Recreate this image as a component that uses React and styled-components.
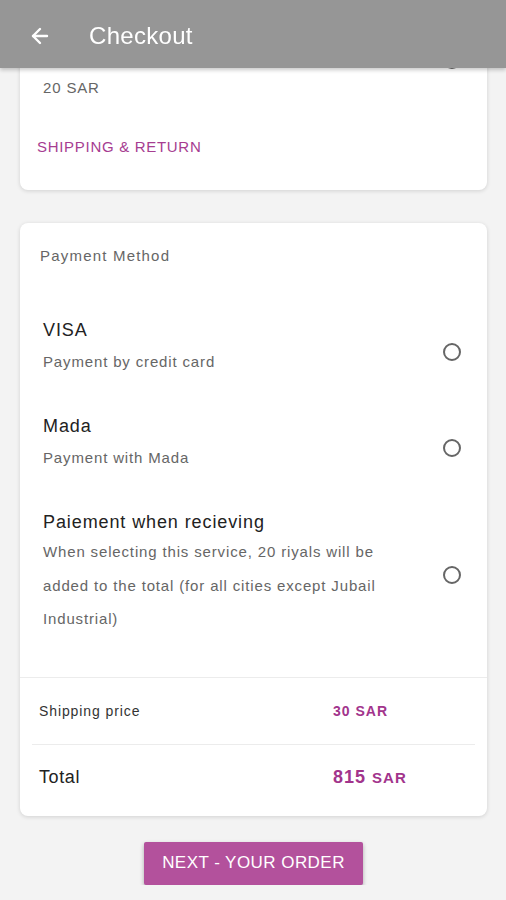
import React from 'react';
import styled, { createGlobalStyle } from 'styled-components';
import { ArrowLeft } from 'lucide-react';

const GlobalStyle = createGlobalStyle`
  html, body {
    margin: 0;
    padding: 0;
    background: #f3f3f3;
    font-family: "Liberation Sans", Arial, sans-serif;
  }
`;

const payments = [
  { title: 'VISA', desc: 'Payment by credit card' },
  { title: 'Mada', desc: 'Payment with Mada' },
  {
    title: 'Paiement when recieving',
    desc: 'When selecting this service, 20 riyals will be added to the total (for all cities except Jubail Industrial)',
    long: true,
  },
];

const Checkout = () => {
  return (
    <>
      <GlobalStyle />
      <Header>
        <BackButton>
          <ArrowLeft size={24} strokeWidth={2.4} color="#fff" />
        </BackButton>
        <Title>Checkout</Title>
      </Header>

      <Page>
        <Card>
          <ShippingBlock>
            <Option>
              <OptionText>
                <OptionTitle>Standard shipping</OptionTitle>
                <OptionDesc $gap={8}>20 SAR</OptionDesc>
              </OptionText>
              <Radio $start />
            </Option>
            <LinkText>SHIPPING &amp; RETURN</LinkText>
          </ShippingBlock>
        </Card>

        <Card>
          <SectionLabel>Payment Method</SectionLabel>
          <OptionList>
            {payments.map((p) => (
              <Option key={p.title}>
                <OptionText>
                  <OptionTitle>{p.title}</OptionTitle>
                  <OptionDesc $long={p.long} $gap={p.long ? 1 : 9}>
                    {p.desc}
                  </OptionDesc>
                </OptionText>
                <Radio $shift={p.long ? 5 : 12} />
              </Option>
            ))}
          </OptionList>

          <Summary>
            <SummaryRow>
              <RowLabel>Shipping price</RowLabel>
              <RowValue>30 SAR</RowValue>
            </SummaryRow>
            <SummaryRow $total>
              <RowLabel $total>Total</RowLabel>
              <RowValue $total>
                815 <small>SAR</small>
              </RowValue>
            </SummaryRow>
          </Summary>
        </Card>

        <Actions>
          <NextButton>NEXT - YOUR ORDER</NextButton>
        </Actions>
      </Page>
    </>
  );
};

const Header = styled.header`
  position: fixed;
  top: 0;
  left: 0;
  right: 0;
  z-index: 10;
  height: 68px;
  box-sizing: border-box;
  padding: 4px 0 0 28px;
  display: flex;
  align-items: center;
  gap: 37px;
  background: #969696;
  box-shadow: 0 2px 4px rgba(0, 0, 0, 0.22);
`;

const BackButton = styled.div`
  display: flex;
  align-items: center;
  width: 24px;
  height: 24px;
`;

const Title = styled.h1`
  margin: 0;
  font-size: 24px;
  font-weight: 400;
  color: #fff;
  letter-spacing: 0.3px;
`;

const Page = styled.main`
  padding: 25px 19px 0 20px;
  display: flex;
  flex-direction: column;
  gap: 33px;
`;

const Card = styled.section`
  background: #fff;
  border-radius: 8px;
  box-shadow: 0 1px 4px rgba(0, 0, 0, 0.14);
  overflow: hidden;
`;

const ShippingBlock = styled.div`
  padding: 20px 0 33px;
`;

const LinkText = styled.div`
  margin-top: 38px;
  padding-left: 17px;
  font-size: 15px;
  line-height: 20px;
  color: #a63d91;
  letter-spacing: 0.7px;
`;

const SectionLabel = styled.div`
  padding: 23px 0 0 20px;
  font-size: 15px;
  line-height: 20px;
  color: #666;
  letter-spacing: 1.2px;
`;

const OptionList = styled.div`
  margin-top: 52px;
  display: flex;
  flex-direction: column;
  gap: 41px;
  padding-bottom: 41px;
`;

const Option = styled.div`
  display: flex;
  align-items: center;
  padding: 0 26px 0 23px;
  gap: 24px;
`;

const OptionText = styled.div`
  flex: 1;
  min-width: 0;
`;

const OptionTitle = styled.div`
  font-size: 18px;
  line-height: 24px;
  color: #222;
  letter-spacing: 0.9px;
`;

const OptionDesc = styled.div`
  margin-top: ${(p) => p.$gap}px;
  font-size: 15px;
  line-height: ${(p) => (p.$long ? '33.5px' : '22px')};
  color: #666;
  letter-spacing: 0.85px;
  max-width: ${(p) => (p.$long ? '350px' : 'none')};
`;

const Radio = styled.span`
  flex: 0 0 auto;
  width: 18px;
  height: 18px;
  box-sizing: border-box;
  border: 2px solid #666;
  border-radius: 50%;
  align-self: ${(p) => (p.$start ? 'flex-start' : 'center')};
  margin-top: ${(p) => (p.$start ? 6 : p.$shift || 0)}px;
`;

const Summary = styled.div`
  border-top: 1px solid #ececec;
  padding: 0 12px 5px;
`;

const SummaryRow = styled.div`
  display: grid;
  grid-template-columns: 301px 1fr;
  align-items: center;
  height: 66px;
  border-top: ${(p) => (p.$total ? '1px solid #ececec' : 'none')};
`;

const RowLabel = styled.div`
  padding-left: 7px;
  font-size: ${(p) => (p.$total ? '18px' : '14px')};
  color: ${(p) => (p.$total ? '#222' : '#333')};
  letter-spacing: ${(p) => (p.$total ? '0.6px' : '0.9px')};
`;

const RowValue = styled.div`
  font-size: ${(p) => (p.$total ? '18px' : '14px')};
  font-weight: 700;
  color: #a2348c;
  letter-spacing: 1px;

  small {
    font-size: 15px;
  }
`;

const Actions = styled.div`
  display: flex;
  justify-content: center;
  margin-top: -7px;
`;

const NextButton = styled.button`
  width: 219px;
  height: 43px;
  border: none;
  border-radius: 2px;
  background: #b3519c;
  color: #fff;
  font-family: inherit;
  font-size: 17px;
  letter-spacing: 0.45px;
  box-shadow: 0 2px 4px rgba(0, 0, 0, 0.3);
  cursor: pointer;
`;

export default Checkout;
